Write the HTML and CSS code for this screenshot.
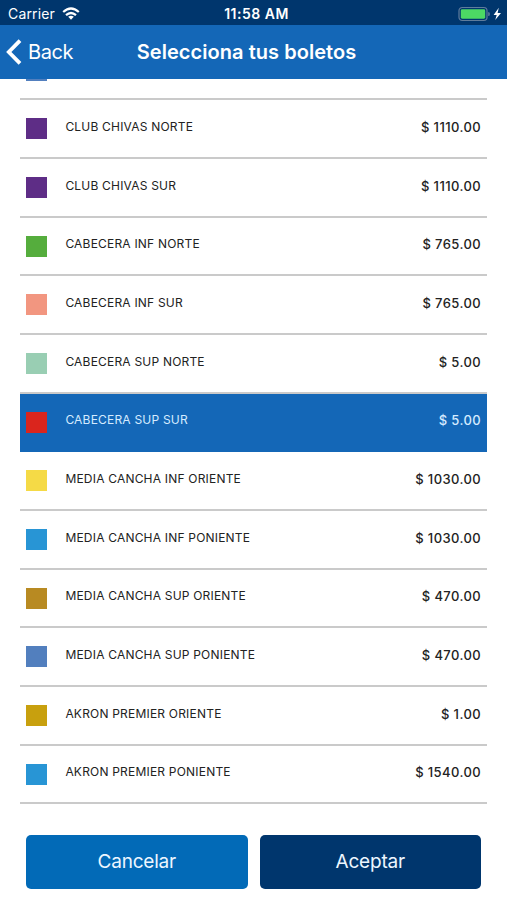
FILE: index.html
```html
<!DOCTYPE html>
<html lang="es">
<head>
    <meta charset="UTF-8">
    <meta name="viewport" content="width=device-width, initial-scale=1.0">
    <title>Selecciona tus boletos</title>
    <link rel="stylesheet" href="styles.css">
</head>
<body>
    <div class="status-bar">
        <div class="status-left">
            <span class="carrier">Carrier</span>
            <svg class="wifi" width="18" height="13" viewBox="0 0 18 13" fill="none" stroke="#fff" stroke-width="2.2">
                <path d="M1.2 5 Q9 -2 16.8 5"/>
                <path d="M4 8.2 Q9 3.8 14 8.2"/>
                <path d="M6.2 9.8 Q9 7.6 11.8 9.8 L9 12.8 Z" fill="#fff" stroke="none"/>
            </svg>
        </div>
        <span class="clock">11:58 AM</span>
        <div class="status-right">
            <svg width="44" height="16" viewBox="0 0 44 16">
                <rect x="1" y="1.5" width="28" height="13" rx="3.2" fill="none" stroke="#5f7c9c" stroke-width="1.2"/>
                <rect x="2.8" y="3.3" width="24.4" height="9.4" rx="1.4" fill="#4cd964"/>
                <path d="M30.8 6.4 Q31.8 8 30.8 9.8 Z" fill="#5f7c9c" stroke="#5f7c9c"/>
                <path d="M40.8 1.8 L35.6 8.9 H38.7 L37.2 14 L43 7 H39.6 Z" fill="#fff"/>
            </svg>
        </div>
    </div>

    <header class="nav-bar">
        <a class="back">
            <svg width="16" height="26" viewBox="0 0 16 26" fill="none" stroke="#fff" stroke-width="3.8">
                <path d="M14 1.6 L2.8 13 L14 24.4"/>
            </svg>
            <span>Back</span>
        </a>
        <h1>Selecciona tus boletos</h1>
    </header>

    <ul class="zones">
        <li class="zone"><span class="swatch blue"></span></li>
        <li class="zone"><span class="swatch purple"></span><span class="name">CLUB CHIVAS NORTE</span><span class="price">$ 1110.00</span></li>
        <li class="zone"><span class="swatch purple"></span><span class="name">CLUB CHIVAS SUR</span><span class="price">$ 1110.00</span></li>
        <li class="zone"><span class="swatch green"></span><span class="name">CABECERA INF NORTE</span><span class="price">$ 765.00</span></li>
        <li class="zone"><span class="swatch salmon"></span><span class="name">CABECERA INF SUR</span><span class="price">$ 765.00</span></li>
        <li class="zone"><span class="swatch mint"></span><span class="name">CABECERA SUP NORTE</span><span class="price">$ 5.00</span></li>
        <li class="zone selected"><span class="swatch red"></span><span class="name">CABECERA SUP SUR</span><span class="price">$ 5.00</span></li>
        <li class="zone"><span class="swatch yellow"></span><span class="name">MEDIA CANCHA INF ORIENTE</span><span class="price">$ 1030.00</span></li>
        <li class="zone"><span class="swatch sky"></span><span class="name">MEDIA CANCHA INF PONIENTE</span><span class="price">$ 1030.00</span></li>
        <li class="zone"><span class="swatch bronze"></span><span class="name">MEDIA CANCHA SUP ORIENTE</span><span class="price">$ 470.00</span></li>
        <li class="zone"><span class="swatch blue"></span><span class="name">MEDIA CANCHA SUP PONIENTE</span><span class="price">$ 470.00</span></li>
        <li class="zone"><span class="swatch gold"></span><span class="name">AKRON PREMIER ORIENTE</span><span class="price">$ 1.00</span></li>
        <li class="zone"><span class="swatch sky"></span><span class="name">AKRON PREMIER PONIENTE</span><span class="price">$ 1540.00</span></li>
    </ul>

    <div class="actions">
        <button class="btn cancel">Cancelar</button>
        <button class="btn accept">Aceptar</button>
    </div>
</body>
</html>
```
FILE: styles.css
```css
* {
    box-sizing: border-box;
}
body {
    margin: 0;
    height: 900px;
    overflow: hidden;
    background-color: #fff;
    color: #222;
    font-family: Inter, "Liberation Sans", sans-serif;
}
.status-bar {
    display: grid;
    grid-template-columns: 1fr auto 1fr;
    align-items: center;
    height: 25px;
    padding: 2px 5px 0 8px;
    background-color: #00366d;
    color: #fff;
    font-size: 14px;
}
.status-left {
    display: flex;
    align-items: center;
    gap: 7px;
}
.carrier {
    letter-spacing: 0.15px;
}
.clock {
    padding-left: 3px;
    font-weight: 600;
    letter-spacing: 0.5px;
}
.status-right {
    display: flex;
    justify-content: flex-end;
}
.nav-bar {
    display: grid;
    grid-template-columns: 1fr auto 1fr;
    align-items: center;
    height: 54px;
    padding: 0 20px 0 6px;
    background-color: #1467b7;
    color: #fff;
}
.back {
    display: flex;
    align-items: center;
    gap: 6px;
    font-size: 20px;
    letter-spacing: -0.4px;
}
h1 {
    margin: 0;
    font-size: 20px;
    font-weight: 600;
    letter-spacing: 0.05px;
}
.zones {
    display: flex;
    flex-direction: column;
    justify-content: flex-end;
    height: 725.3px;
    margin: 0;
    padding: 0 20px 0 20.4px;
    overflow: hidden;
    list-style: none;
}
.zone {
    display: flex;
    flex: none;
    align-items: flex-start;
    height: 58.67px;
    padding: 18px 6px 0;
    border-bottom: 2px solid #cacaca;
}
.zone.selected {
    background-color: #1467b7;
    border-bottom-color: #1467b7;
    color: #d5ebff;
}
.swatch {
    width: 21px;
    height: 21px;
    margin-right: 18px;
}
.name {
    margin-top: -0.4px;
    font-size: 12px;
    line-height: 18px;
    letter-spacing: 0.2px;
}
.price {
    margin-top: -0.4px;
    margin-left: auto;
    font-size: 13px;
    font-weight: 500;
    line-height: 18px;
    letter-spacing: 0.4px;
}
.blue { background-color: #527fbe; }
.purple { background-color: #5e2d86; }
.green { background-color: #55ad3d; }
.salmon { background-color: #f29680; }
.mint { background-color: #99ceb3; }
.red { background-color: #da251d; }
.yellow { background-color: #f5da46; }
.sky { background-color: #2895d5; }
.bronze { background-color: #b88a22; }
.gold { background-color: #c8a00e; }
.actions {
    display: flex;
    gap: 12px;
    padding: 30.7px 26px 0;
}
.btn {
    flex: 1;
    height: 54px;
    padding: 0;
    border: none;
    border-radius: 5px;
    color: #edf6ff;
    font-family: inherit;
    font-size: 19px;
    letter-spacing: -0.2px;
}
.cancel {
    background-color: #026ab7;
}
.accept {
    background-color: #00366d;
}
```
